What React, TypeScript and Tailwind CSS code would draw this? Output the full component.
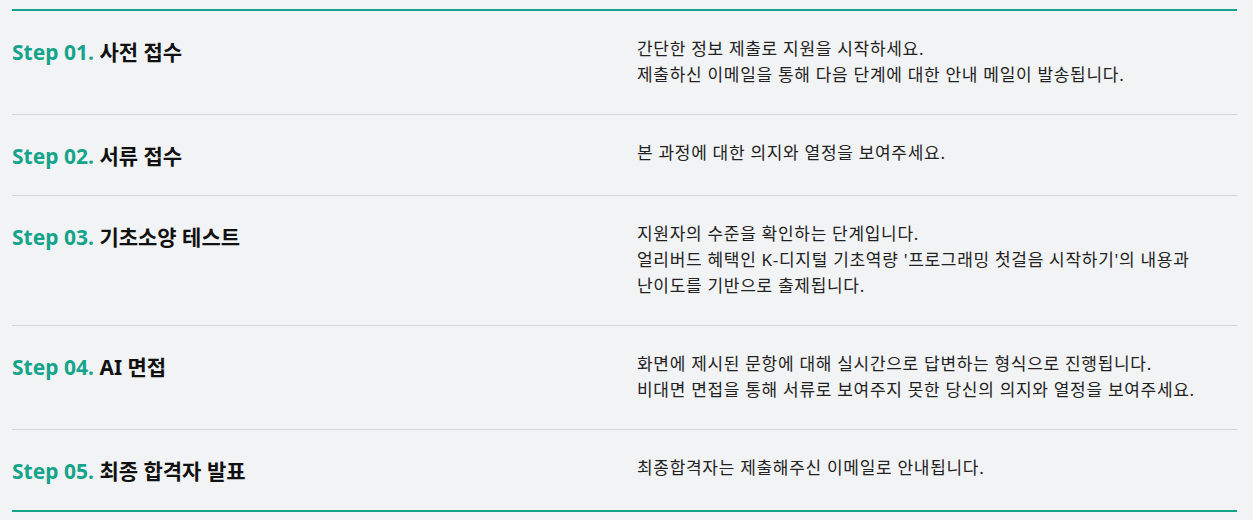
const steps = [
  {
    no: "01",
    title: "사전 접수",
    lines: [
      "간단한 정보 제출로 지원을 시작하세요.",
      "제출하신 이메일을 통해 다음 단계에 대한 안내 메일이 발송됩니다.",
    ],
  },
  {
    no: "02",
    title: "서류 접수",
    lines: ["본 과정에 대한 의지와 열정을 보여주세요."],
  },
  {
    no: "03",
    title: "기초소양 테스트",
    lines: [
      "지원자의 수준을 확인하는 단계입니다.",
      "얼리버드 혜택인 K-디지털 기초역량 '프로그래밍 첫걸음 시작하기'의 내용과",
      "난이도를 기반으로 출제됩니다.",
    ],
  },
  {
    no: "04",
    title: "AI 면접",
    lines: [
      "화면에 제시된 문항에 대해 실시간으로 답변하는 형식으로 진행됩니다.",
      "비대면 면접을 통해 서류로 보여주지 못한 당신의 의지와 열정을 보여주세요.",
    ],
  },
  {
    no: "05",
    title: "최종 합격자 발표",
    lines: ["최종합격자는 제출해주신 이메일로 안내됩니다."],
  },
];

export default function App() {
  return (
    <div className="min-h-[520px] bg-[#f2f3f5] pl-3 pr-4 pt-[9px] font-['Noto_Sans','Noto_Sans_CJK_KR',sans-serif]">
      <div className="border-y-2 border-[#14a38b]">
        {steps.map((s, i) => (
          <div
            key={s.no}
            className={`grid grid-cols-[625px_1fr] pt-[25px] pb-[26px] ${
              i < steps.length - 1 ? "border-b border-[#d5d6d9]" : ""
            }`}
          >
            <div className="pt-[4px] text-[21px] font-bold leading-[25px] text-[#111]">
              <span className="text-[#14a38b]">Step {s.no}.</span> {s.title}
            </div>
            <div className="text-[17px] leading-[26px] tracking-[0.7px] text-[#222]">
              {s.lines.map((l) => (
                <div key={l}>{l}</div>
              ))}
            </div>
          </div>
        ))}
      </div>
    </div>
  );
}
